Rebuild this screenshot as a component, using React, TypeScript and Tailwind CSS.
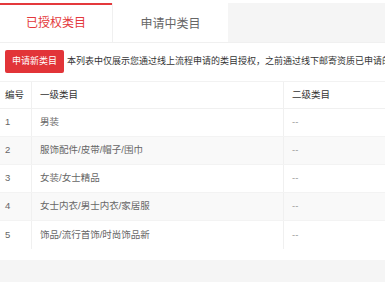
const rows = [
  { id: 1, name: "男装" },
  { id: 2, name: "服饰配件/皮带/帽子/围巾" },
  { id: 3, name: "女装/女士精品" },
  { id: 4, name: "女士内衣/男士内衣/家居服" },
  { id: 5, name: "饰品/流行首饰/时尚饰品新" },
];

export default function App() {
  return (
    <div
      className="flex h-[282px] w-[385px] flex-col overflow-hidden bg-white"
      style={{ fontFamily: '"Liberation Sans", "Noto Sans CJK SC", sans-serif' }}
    >
      {/* Tabs */}
      <div className="flex h-[43px] shrink-0 border-b border-[#f0f0f0] pt-[3px]">
        <div className="flex w-[112px] items-center justify-center border-t-2 border-[#e4393c] bg-white pb-[1px] text-[12px] text-[#e4393c]">
          已授权类目
        </div>
        <div className="flex w-[116px] items-center justify-center border-l border-[#f0f0f0] bg-white pt-[2px] text-[12px] text-[#666]">
          申请中类目
        </div>
        <div className="flex-1 bg-[#f5f5f5]" />
      </div>

      {/* Toolbar */}
      <div className="flex shrink-0 items-center whitespace-nowrap pl-[5px] pt-[7px]">
        <button
          type="button"
          className="h-[23px] w-[59px] shrink-0 rounded-[2px] bg-[#e23438] text-[9px] text-white"
        >
          申请新类目
        </button>
        <span className="ml-[3px] text-[9px] text-[#333]">
          本列表中仅展示您通过线上流程申请的类目授权，之前通过线下邮寄资质已申请的类目不在此展示
        </span>
      </div>

      {/* Table */}
      <div className="mt-[8px] shrink-0 border-t border-[#f2f2f2] text-[9.5px]">
        <div className="grid h-[27px] grid-cols-[32px_252px_1fr] border-b border-[#f0f0f0] text-[#333]">
          <div className="flex items-center border-r border-[#f0f0f0] pl-[5px]">编号</div>
          <div className="flex items-center border-r border-[#f0f0f0] pl-[8px]">一级类目</div>
          <div className="flex items-center pl-[8px]">二级类目</div>
        </div>
        {rows.map((r, i) => (
          <div
            key={r.id}
            className={
              "grid h-[28px] grid-cols-[32px_252px_1fr] text-[#666] " +
              (i % 2 === 1 ? "bg-[#f9f9f9]" : "bg-white") +
              (i < rows.length - 1 ? " border-b border-[#f3f3f3]" : "")
            }
          >
            <div className="flex items-center border-r border-[#f0f0f0] pl-[5px]">{r.id}</div>
            <div className="flex items-center border-r border-[#f0f0f0] pl-[8px]">{r.name}</div>
            <div className="flex items-center pl-[8px] text-[#999]">--</div>
          </div>
        ))}
      </div>

      <div className="h-[11px] shrink-0 bg-white" />
      <div className="flex-1 bg-[#f5f5f5]" />
    </div>
  );
}
